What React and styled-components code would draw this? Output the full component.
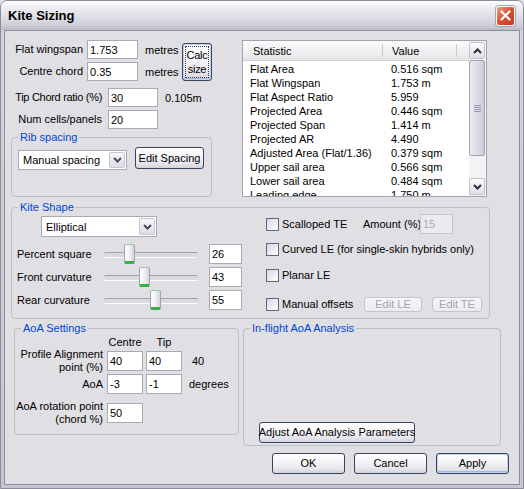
import React from 'react';
import styled, { createGlobalStyle, css } from 'styled-components';

const Global = createGlobalStyle`
  html, body { margin: 0; padding: 0; background: #e0dfe3; }
  body { font-family: "Liberation Sans", Arial, sans-serif; font-size: 11px; color: #000; }
  * { box-sizing: border-box; }
`;

const Window = styled.div`
  width: 524px;
  height: 489px;
  display: flex;
  flex-direction: column;
  background: linear-gradient(#d4d4de, #c6c6d2);
  border: 1px solid #8c8c9c;
  border-radius: 7px 7px 0 0;
  overflow: hidden;
`;

const TitleBar = styled.div`
  height: 29px;
  flex: none;
  display: flex;
  align-items: center;
  justify-content: space-between;
  padding: 0 8px 0 7px;
  background: linear-gradient(#ffffff 0%, #ededf2 22%, #dedee5 55%, #cdcdd8 85%, #babac8 100%);
`;

const Title = styled.span`
  font-weight: bold;
  font-size: 13px;
  color: #000;
`;

const CloseBtn = styled.div`
  width: 19px;
  height: 20px;
  border-radius: 3px;
  border: 1px solid #ffffff;
  background: linear-gradient(135deg, #eb9d84, #d9512f 50%, #c23a1f);
  box-shadow: 0 0 0 1px #a4a4b2;
  display: flex;
  align-items: center;
  justify-content: center;
`;

const Client = styled.div`
  flex: 1;
  margin: 0 3px 3px;
  border: 1px solid #8e8e9c;
  background: #e0dfe3;
  padding: 9px 10px 0 6px;
  display: flex;
  flex-direction: column;
`;

const TopSection = styled.div`
  display: flex;
  align-items: flex-start;
  height: 157px;
  flex: none;
`;

const LeftCol = styled.div`
  width: 201px;
  flex: none;
  display: flex;
  flex-direction: column;
`;

const SpanBlock = styled.div`
  display: flex;
  align-items: flex-end;
`;

const FieldStack = styled.div`
  display: flex;
  flex-direction: column;
`;

const FieldRow = styled.div`
  display: flex;
  align-items: center;
  height: ${p => p.$h || 19}px;
  margin-top: ${p => p.$mt || 0}px;
`;

const FieldLabel = styled.div`
  width: ${p => p.$w}px;
  flex: none;
  display: flex;
  justify-content: flex-end;
  white-space: nowrap;
  text-align: right;
  letter-spacing: ${p => p.$ls || 0}px;
  line-height: 13px;
`;

const Unit = styled.div`
  margin-left: ${p => p.$ml || 0}px;
  width: ${p => (p.$w ? `${p.$w}px` : 'auto')};
  flex: none;
  white-space: nowrap;
`;

const TextInput = styled.div`
  width: ${p => p.$w}px;
  height: ${p => p.$h || 19}px;
  margin-left: ${p => p.$ml || 0}px;
  flex: none;
  background: #fff;
  border: 1px solid #a5acb2;
  display: flex;
  align-items: center;
  padding-left: 2px;
  white-space: nowrap;
  ${p => p.$disabled && css`
    background: #ebebef;
    border-color: #c5c5cd;
    color: #a9a9b3;
  `}
`;

const Button = styled.div`
  width: ${p => p.$w}px;
  height: ${p => p.$h}px;
  margin-left: ${p => p.$ml || 0}px;
  flex: none;
  border: 1px solid #36445e;
  border-radius: 3px;
  background: linear-gradient(#ffffff, #f4f4f7 45%, #e4e4ea 80%, #d2d2da);
  display: flex;
  align-items: center;
  justify-content: center;
  text-align: center;
  white-space: nowrap;
  line-height: 13px;
  ${p => p.$default && css`
    box-shadow: inset 0 0 0 1px #c3d2f2, inset 0 -1px 0 1px #a3b7e4;
  `}
  ${p => p.$disabled && css`
    border-color: #c4c4cc;
    color: #a4a4ae;
    background: linear-gradient(#f6f6f8, #ececf0);
  `}
`;

const FocusRing = styled.span`
  align-self: stretch;
  flex: 1;
  margin: 2px;
  border: 1px dotted #3a3a3a;
  display: flex;
  align-items: center;
  justify-content: center;
  line-height: 14px;
  letter-spacing: -0.3px;
`;

const Group = styled.fieldset`
  margin: ${p => p.$mt || 0}px 0 0 ${p => p.$ml || 0}px;
  width: ${p => p.$w}px;
  height: ${p => p.$h}px;
  flex: none;
  border: 1px solid #bebec6;
  border-radius: 4px;
  padding: 0;
  min-width: 0;
`;

const Legend = styled.legend`
  color: #0046d5;
  padding: 0 2px;
  margin-left: 6px;
  line-height: 13px;
  font-size: 11px;
`;

const RibRow = styled.div`
  display: flex;
  align-items: flex-start;
  padding: 3px 0 0 6px;
`;

const Combo = styled.div`
  width: ${p => p.$w}px;
  height: ${p => p.$h}px;
  margin: ${p => p.$mt || 0}px 0 0 ${p => p.$ml || 0}px;
  flex: none;
  background: #fff;
  border: 1px solid #a5acb2;
  display: flex;
  align-items: center;
  padding: 1px;
`;

const ComboText = styled.span`
  flex: 1;
  padding-left: 3px;
  white-space: nowrap;
`;

const ComboArrow = styled.div`
  width: 16px;
  align-self: stretch;
  border: 1px solid #c6c6d2;
  border-radius: 2px;
  background: linear-gradient(#f8f8fb, #dcdce5);
  display: flex;
  align-items: center;
  justify-content: center;
`;

const StatsList = styled.div`
  margin-left: 30px;
  width: 245px;
  height: 157px;
  flex: none;
  border: 1px solid #a0a4ae;
  background: #fff;
  display: flex;
`;

const ListMain = styled.div`
  flex: 1;
  display: flex;
  flex-direction: column;
  overflow: hidden;
`;

const ListHeader = styled.div`
  height: 20px;
  flex: none;
  display: flex;
  background: linear-gradient(#fafafb, #eeeef0 70%, #e2e2e6);
  border-bottom: 1px solid #cfcfd6;
`;

const HeaderCell = styled.div`
  position: relative;
  width: ${p => p.$w}px;
  flex: none;
  display: flex;
  align-items: center;
  padding-left: ${p => p.$pl}px;
  &::after {
    content: '';
    position: absolute;
    right: 0;
    top: 3px;
    bottom: 3px;
    width: 1px;
    background: #c8c8d0;
  }
`;

const ListBody = styled.div`
  padding-top: 1px;
`;

const ListRow = styled.div`
  display: flex;
  height: 14px;
  line-height: 14px;
  white-space: nowrap;
`;

const Cell = styled.div`
  width: ${p => (p.$w ? `${p.$w}px` : 'auto')};
  flex: none;
  padding-left: ${p => p.$pl}px;
`;

const ScrollBar = styled.div`
  width: 17px;
  flex: none;
  display: flex;
  flex-direction: column;
  padding: 1px 1px 1px 0;
  background: #f3f3f6;
`;

const ScrollBtn = styled.div`
  height: 17px;
  flex: none;
  border: 1px solid #c4c4cf;
  border-radius: 2px;
  background: linear-gradient(#fbfbfd, #dedee6);
  display: flex;
  align-items: center;
  justify-content: center;
`;

const ScrollThumb = styled.div`
  height: 96px;
  margin-top: 1px;
  flex: none;
  border: 1px solid #a3a3b6;
  border-radius: 2px;
  background: linear-gradient(90deg, #ebebf2, #dadae4 60%, #cbcbd8);
  display: flex;
  flex-direction: column;
  align-items: center;
  justify-content: center;
  gap: 1px;
`;

const Grip = styled.div`
  width: 7px;
  height: 1px;
  background: #9898ac;
`;

const ScrollTrack = styled.div`
  flex: 1;
`;

const KiteBody = styled.div`
  display: flex;
  padding: 1px 0 0 5px;
`;

const ShapePane = styled.div`
  width: 225px;
  flex: none;
  display: flex;
  flex-direction: column;
`;

const SliderRow = styled.div`
  display: flex;
  align-items: center;
  height: 20px;
  margin-top: ${p => p.$mt || 0}px;
`;

const SliderLabel = styled.div`
  width: 84px;
  flex: none;
  white-space: nowrap;
`;

const Track = styled.div`
  position: relative;
  width: 100px;
  height: 20px;
  flex: none;
  &::before {
    content: '';
    position: absolute;
    left: 3px;
    right: 3px;
    top: 8px;
    height: 4px;
    border-top: 1px solid #a2a2ac;
    border-bottom: 1px solid #ffffff;
    background: #d9d9df;
    border-radius: 2px;
  }
`;

const Thumb = styled.div`
  position: absolute;
  top: 0;
  width: 11px;
  height: 20px;
  border: 1px solid #a2a2ae;
  border-top-color: #93cf93;
  border-bottom: 3px solid #3aaf45;
  border-radius: 2px;
  background: linear-gradient(90deg, #ffffff, #f1f1f5 50%, #d3d3dc);
`;

const OptionPane = styled.div`
  margin: -1px 0 0 24px;
  display: flex;
  flex-direction: column;
`;

const OptionRow = styled.div`
  display: flex;
  align-items: center;
  height: 20px;
  margin-top: ${p => p.$mt || 0}px;
`;

const CheckBox = styled.div`
  width: 13px;
  height: 13px;
  flex: none;
  border: 1px solid #5b6786;
  background: linear-gradient(135deg, #d6d6de, #f2f2f5 65%, #ffffff);
`;

const CheckText = styled.div`
  margin-left: 3px;
  width: ${p => (p.$w ? `${p.$w}px` : 'auto')};
  flex: none;
  white-space: nowrap;
`;

const BottomSection = styled.div`
  display: flex;
  align-items: flex-start;
  margin-top: 3px;
`;

const AoaGrid = styled.div`
  display: grid;
  grid-template-columns: 92px 39px 43px auto;
  grid-template-rows: 13px 26px 20px 6px 26px;
  align-items: center;
`;

const ColHead = styled.div`
  width: 36px;
  text-align: center;
  white-space: nowrap;
`;

const GridLabel = styled.div`
  display: flex;
  justify-content: flex-end;
  text-align: right;
  padding-right: 4px;
  line-height: 13px;
  white-space: nowrap;
`;

const GridUnit = styled.div`
  padding-left: ${p => p.$pl || 0}px;
  white-space: nowrap;
`;

const GridSpacer = styled.div`
  grid-column: 1 / -1;
`;

const InflightBody = styled.div`
  height: 110px;
  display: flex;
  align-items: flex-end;
  padding: 0 0 2px 15px;
`;

const ButtonBar = styled.div`
  display: flex;
  justify-content: flex-end;
  gap: 9px;
  margin-top: 7px;
`;

const Chevron = ({ up, color = '#2e2e3a' }) => (
  <svg width="9" height="6" viewBox="0 0 9 6">
    <path d={up ? 'M1 5 L4.5 1.5 L8 5' : 'M1 1 L4.5 4.5 L8 1'} stroke={color} strokeWidth="2" fill="none" />
  </svg>
);

const stats = [
  ['Flat Area', '0.516 sqm'],
  ['Flat Wingspan', '1.753 m'],
  ['Flat Aspect Ratio', '5.959'],
  ['Projected Area', '0.446 sqm'],
  ['Projected Span', '1.414 m'],
  ['Projected AR', '4.490'],
  ['Adjusted Area (Flat/1.36)', '0.379 sqm'],
  ['Upper sail area', '0.566 sqm'],
  ['Lower sail area', '0.484 sqm'],
  ['Leading edge', '1.750 m'],
];

const sliders = [
  ['Percent square', 26, 0],
  ['Front curvature', 43, 3],
  ['Rear curvature', 55, 3],
];

export default function App() {
  return (
    <>
      <Global />
      <Window>
        <TitleBar>
          <Title>Kite Sizing</Title>
          <CloseBtn>
            <svg width="11" height="11" viewBox="0 0 11 11">
              <path d="M1.5 1.5 L9.5 9.5 M9.5 1.5 L1.5 9.5" stroke="#fff" strokeWidth="2.2" strokeLinecap="round" />
            </svg>
          </CloseBtn>
        </TitleBar>
        <Client>
          <TopSection>
            <LeftCol>
              <SpanBlock>
                <FieldStack>
                  <FieldRow>
                    <FieldLabel $w={72}>Flat wingspan</FieldLabel>
                    <TextInput $w={51} $ml={4}>1.753</TextInput>
                    <Unit $ml={7} $w={37}>metres</Unit>
                  </FieldRow>
                  <FieldRow $mt={3}>
                    <FieldLabel $w={72}>Centre chord</FieldLabel>
                    <TextInput $w={51} $ml={4}>0.35</TextInput>
                    <Unit $ml={7} $w={37}>metres</Unit>
                  </FieldRow>
                </FieldStack>
                <Button $w={30} $h={38} $default>
                  <FocusRing>Calc<br />size</FocusRing>
                </Button>
              </SpanBlock>
              <FieldRow $mt={7}>
                <FieldLabel $w={91} $ls={-0.3}>Tip Chord ratio (%)</FieldLabel>
                <TextInput $w={50} $ml={6}>30</TextInput>
                <Unit $ml={7}>0.105m</Unit>
              </FieldRow>
              <FieldRow $mt={3}>
                <FieldLabel $w={91}>Num cells/panels</FieldLabel>
                <TextInput $w={50} $ml={6}>20</TextInput>
              </FieldRow>
              <Group $w={201} $h={66} $mt={2}>
                <Legend>Rib spacing</Legend>
                <RibRow>
                  <Combo $w={109} $h={20} $mt={3}>
                    <ComboText>Manual spacing</ComboText>
                    <ComboArrow><Chevron color="#4a4a5e" /></ComboArrow>
                  </Combo>
                  <Button $w={69} $h={22} $ml={8}>Edit Spacing</Button>
                </RibRow>
              </Group>
            </LeftCol>
            <StatsList>
              <ListMain>
                <ListHeader>
                  <HeaderCell $w={140} $pl={10}>Statistic</HeaderCell>
                  <HeaderCell $w={74} $pl={9}>Value</HeaderCell>
                </ListHeader>
                <ListBody>
                  {stats.map(([k, v]) => (
                    <ListRow key={k}>
                      <Cell $w={140} $pl={7}>{k}</Cell>
                      <Cell $pl={8}>{v}</Cell>
                    </ListRow>
                  ))}
                </ListBody>
              </ListMain>
              <ScrollBar>
                <ScrollBtn><Chevron up /></ScrollBtn>
                <ScrollThumb>
                  <Grip /><Grip /><Grip /><Grip />
                </ScrollThumb>
                <ScrollTrack />
                <ScrollBtn><Chevron /></ScrollBtn>
              </ScrollBar>
            </StatsList>
          </TopSection>

          <Group $w={479} $h={118} $mt={4}>
            <Legend>Kite Shape</Legend>
            <KiteBody>
              <ShapePane>
                <Combo $w={116} $h={21} $ml={24} $mt={1}>
                  <ComboText>Elliptical</ComboText>
                  <ComboArrow><Chevron color="#4a4a5e" /></ComboArrow>
                </Combo>
                {sliders.map(([label, value, gap], i) => (
                  <SliderRow key={label} $mt={i === 0 ? 7 : gap}>
                    <SliderLabel>{label}</SliderLabel>
                    <Track>
                      <Thumb style={{ left: `${Math.round(value * 0.89)}px` }} />
                    </Track>
                    <TextInput $w={33} $h={20} $ml={8}>{value}</TextInput>
                  </SliderRow>
                ))}
              </ShapePane>
              <OptionPane>
                <OptionRow>
                  <CheckBox />
                  <CheckText $w={81}>Scalloped TE</CheckText>
                  <Unit $w={57}>Amount (%)</Unit>
                  <TextInput $w={33} $h={20} $disabled>15</TextInput>
                </OptionRow>
                <OptionRow $mt={5}>
                  <CheckBox />
                  <CheckText>Curved LE (for single-skin hybrids only)</CheckText>
                </OptionRow>
                <OptionRow $mt={6}>
                  <CheckBox />
                  <CheckText>Planar LE</CheckText>
                </OptionRow>
                <OptionRow $mt={9}>
                  <CheckBox />
                  <CheckText $w={82}>Manual offsets</CheckText>
                  <Button $w={58} $h={15} $disabled>Edit LE</Button>
                  <Button $w={50} $h={15} $ml={10} $disabled>Edit TE</Button>
                </OptionRow>
              </OptionPane>
            </KiteBody>
          </Group>

          <BottomSection>
            <Group $w={225} $h={113} $ml={3}>
              <Legend>AoA Settings</Legend>
              <AoaGrid>
                <span />
                <ColHead>Centre</ColHead>
                <ColHead>Tip</ColHead>
                <span />

                <GridLabel>Profile Alignment<br />point (%)</GridLabel>
                <TextInput $w={36} $h={20}>40</TextInput>
                <TextInput $w={36} $h={20}>40</TextInput>
                <GridUnit $pl={3}>40</GridUnit>

                <GridLabel>AoA</GridLabel>
                <TextInput $w={36} $h={20}>-3</TextInput>
                <TextInput $w={36} $h={20}>-1</TextInput>
                <GridUnit>degrees</GridUnit>

                <GridSpacer />

                <GridLabel>AoA rotation point<br />(chord %)</GridLabel>
                <TextInput $w={36} $h={20}>50</TextInput>
              </AoaGrid>
            </Group>
            <Group $w={258} $h={124} $ml={4}>
              <Legend>In-flight AoA Analysis</Legend>
              <InflightBody>
                <Button $w={156} $h={21}>Adjust AoA Analysis Parameters</Button>
              </InflightBody>
            </Group>
          </BottomSection>

          <ButtonBar>
            <Button $w={73} $h={21}>OK</Button>
            <Button $w={73} $h={21}>Cancel</Button>
            <Button $w={73} $h={21} $default>Apply</Button>
          </ButtonBar>
        </Client>
      </Window>
    </>
  );
}
